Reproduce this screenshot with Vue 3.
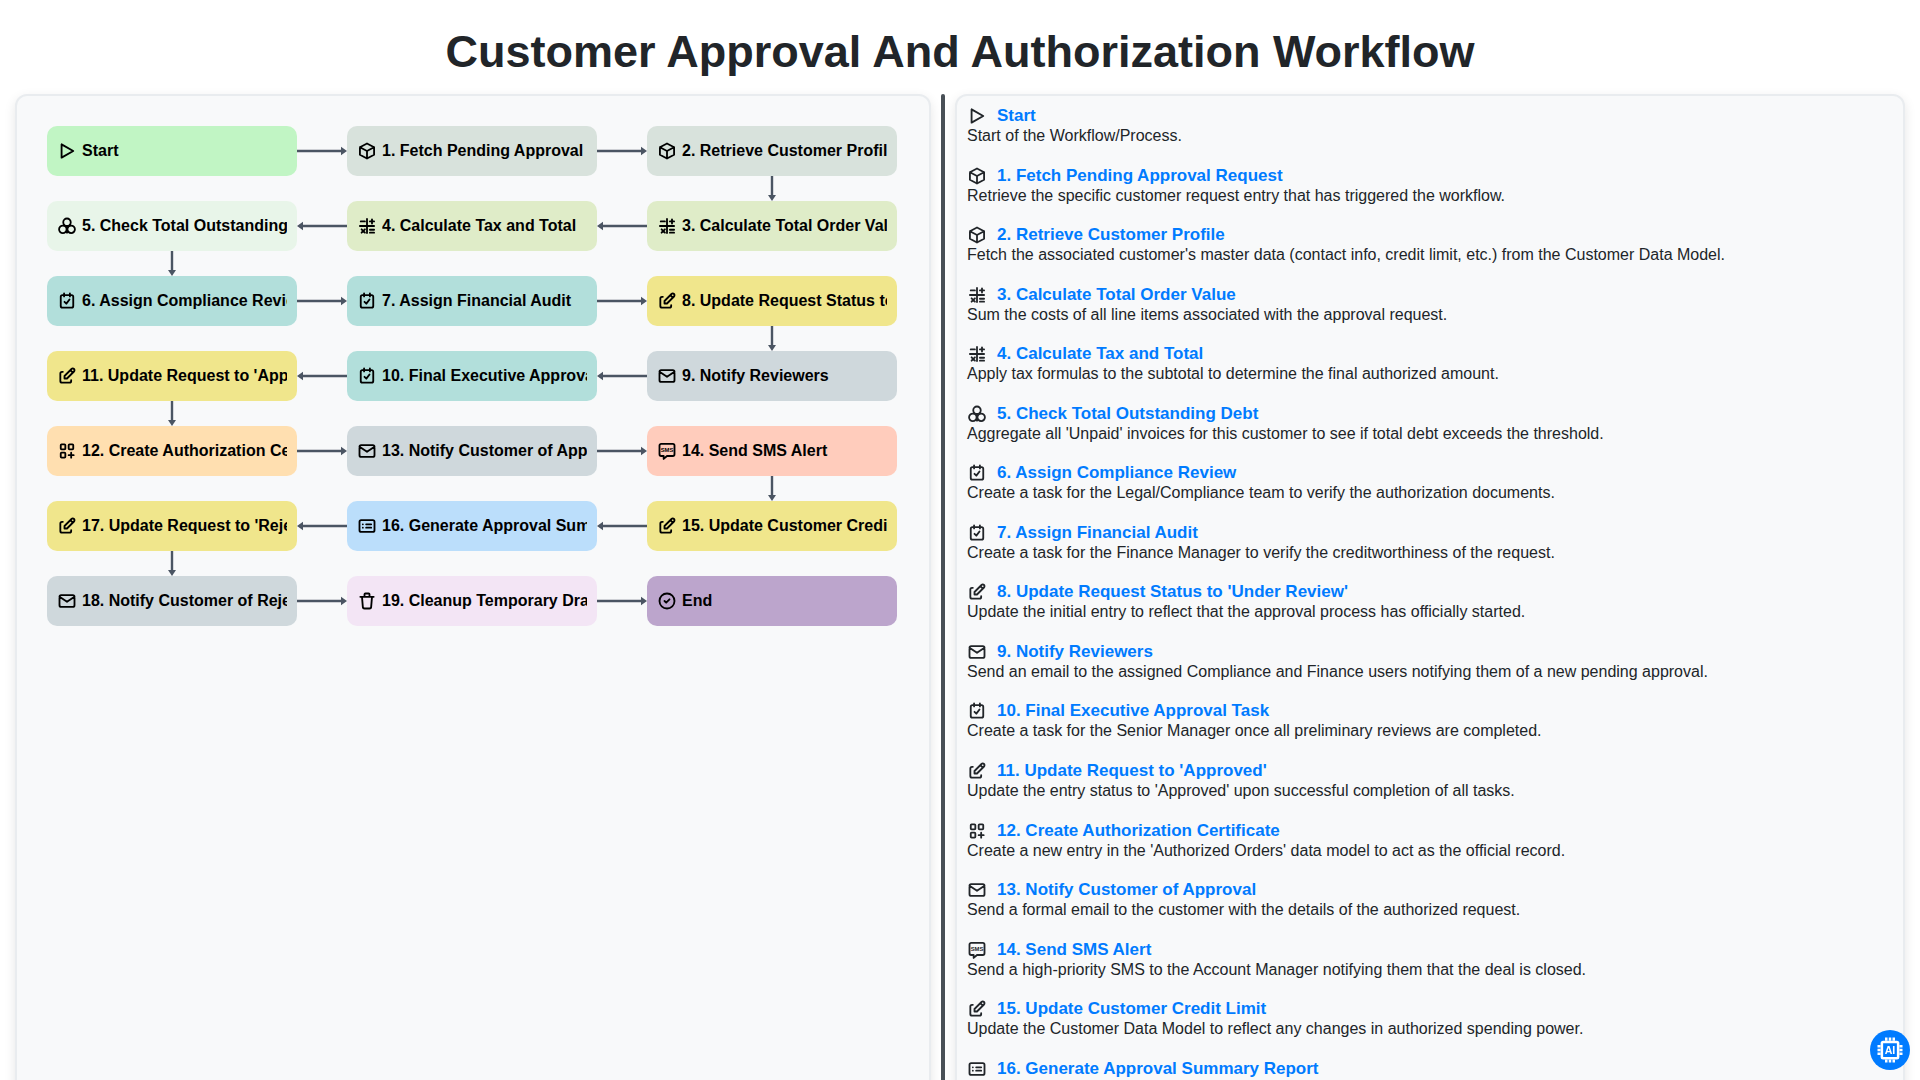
<script setup>
const icons = {
  play: 'M5.5 4v16l14 -8z',
  box: 'M12 3l8.5 4.5v9l-8.5 4.5l-8.5 -4.5v-9z M12 12l8.5 -4.5 M12 12v9 M12 12l-8.5 -4.5',
  math: 'M3.5 12h17 M12 3.5v17 M4.5 6.5h5 M15.5 6.5h5 M18 4v5 M5.5 16l4 4 M9.5 16l-4 4 M15.5 16.5h5 M15.5 20h5',
  circles: 'M12 7.5m-4.5 0a4.5 4.5 0 1 0 9 0a4.5 4.5 0 1 0 -9 0 M7 16m-4.5 0a4.5 4.5 0 1 0 9 0a4.5 4.5 0 1 0 -9 0 M17 16m-4.5 0a4.5 4.5 0 1 0 9 0a4.5 4.5 0 1 0 -9 0 M12 12v8 M7.5 11.5l4.5 1l4.5 -1',
  task: 'M4.5 7a2 2 0 0 1 2 -2h11a2 2 0 0 1 2 2v11a2 2 0 0 1 -2 2h-11a2 2 0 0 1 -2 -2z M8.5 3v3.5 M15.5 3v3.5 M9 13l2.2 2.2l3.8 -5',
  edit: 'M7 7h-1a2 2 0 0 0 -2 2v9a2 2 0 0 0 2 2h9a2 2 0 0 0 2 -2v-1 M20.385 6.585a2.1 2.1 0 0 0 -2.97 -2.97l-8.415 8.385v3h3l8.385 -8.415z M16 5l3 3',
  mail: 'M3 7a2 2 0 0 1 2 -2h14a2 2 0 0 1 2 2v10a2 2 0 0 1 -2 2h-14a2 2 0 0 1 -2 -2z M3 7l9 6l9 -6',
  apps: 'M4.5 5a1 1 0 0 1 1 -1h3.5a1 1 0 0 1 1 1v4a1 1 0 0 1 -1 1h-3.5a1 1 0 0 1 -1 -1z M14 5a1 1 0 0 1 1 -1h3.5a1 1 0 0 1 1 1v4a1 1 0 0 1 -1 1h-3.5a1 1 0 0 1 -1 -1z M4.5 15a1 1 0 0 1 1 -1h3.5a1 1 0 0 1 1 1v4a1 1 0 0 1 -1 1h-3.5a1 1 0 0 1 -1 -1z M14 17h6 M17 14v6',
  sms: 'M3 5.5a2 2 0 0 1 2 -2h14a2 2 0 0 1 2 2v10.5a2 2 0 0 1 -2 2h-7l-4 3.5v-3.5h-3a2 2 0 0 1 -2 -2z',
  report: 'M3 7a2 2 0 0 1 2 -2h14a2 2 0 0 1 2 2v10a2 2 0 0 1 -2 2h-14a2 2 0 0 1 -2 -2z M7 10h.01 M7 14h.01 M11 10h6 M11 14h6',
  trash: 'M4 7h16 M6 7l1 12a2 2 0 0 0 2 2h6a2 2 0 0 0 2 -2l1 -12 M9 7v-3a1 1 0 0 1 1 -1h4a1 1 0 0 1 1 1v3',
  done: 'M3 12a9 9 0 1 0 18 0a9 9 0 1 0 -18 0 M9 12l2 2l4 -4'
}

const n = (label, icon, color) => ({ label, icon, color })

// snake layout: every second row runs right to left
const rows = [
  { dir: 'right', down: 'end', nodes: [n('Start', 'play', '#c1f5c4'), n('1. Fetch Pending Approval Request', 'box', '#d8e2dc'), n('2. Retrieve Customer Profile', 'box', '#d8e2dc')] },
  { dir: 'left', down: 'start', nodes: [n('5. Check Total Outstanding Debt', 'circles', '#e8f5e9'), n('4. Calculate Tax and Total', 'math', '#dfecc8'), n('3. Calculate Total Order Value', 'math', '#dfecc8')] },
  { dir: 'right', down: 'end', nodes: [n('6. Assign Compliance Review', 'task', '#b2dfdb'), n('7. Assign Financial Audit', 'task', '#b2dfdb'), n("8. Update Request Status to 'Under Review'", 'edit', '#f0e68c')] },
  { dir: 'left', down: 'start', nodes: [n("11. Update Request to 'Approved'", 'edit', '#f0e68c'), n('10. Final Executive Approval Task', 'task', '#b2dfdb'), n('9. Notify Reviewers', 'mail', '#cfd8dc')] },
  { dir: 'right', down: 'end', nodes: [n('12. Create Authorization Certificate', 'apps', '#ffdfb0'), n('13. Notify Customer of Approval', 'mail', '#cfd8dc'), n('14. Send SMS Alert', 'sms', '#ffccbc')] },
  { dir: 'left', down: 'start', nodes: [n("17. Update Request to 'Rejected'", 'edit', '#f0e68c'), n('16. Generate Approval Summary Report', 'report', '#bbdefb'), n('15. Update Customer Credit Limit', 'edit', '#f0e68c')] },
  { dir: 'right', down: null, nodes: [n('18. Notify Customer of Rejection', 'mail', '#cfd8dc'), n('19. Cleanup Temporary Drafts', 'trash', '#f3e5f5'), n('End', 'done', '#bca5cc')] }
]

const steps = [
  { icon: 'play', title: 'Start', text: 'Start of the Workflow/Process.' },
  { icon: 'box', title: '1. Fetch Pending Approval Request', text: 'Retrieve the specific customer request entry that has triggered the workflow.' },
  { icon: 'box', title: '2. Retrieve Customer Profile', text: "Fetch the associated customer's master data (contact info, credit limit, etc.) from the Customer Data Model." },
  { icon: 'math', title: '3. Calculate Total Order Value', text: 'Sum the costs of all line items associated with the approval request.' },
  { icon: 'math', title: '4. Calculate Tax and Total', text: 'Apply tax formulas to the subtotal to determine the final authorized amount.' },
  { icon: 'circles', title: '5. Check Total Outstanding Debt', text: "Aggregate all 'Unpaid' invoices for this customer to see if total debt exceeds the threshold." },
  { icon: 'task', title: '6. Assign Compliance Review', text: 'Create a task for the Legal/Compliance team to verify the authorization documents.' },
  { icon: 'task', title: '7. Assign Financial Audit', text: 'Create a task for the Finance Manager to verify the creditworthiness of the request.' },
  { icon: 'edit', title: "8. Update Request Status to 'Under Review'", text: 'Update the initial entry to reflect that the approval process has officially started.' },
  { icon: 'mail', title: '9. Notify Reviewers', text: 'Send an email to the assigned Compliance and Finance users notifying them of a new pending approval.' },
  { icon: 'task', title: '10. Final Executive Approval Task', text: 'Create a task for the Senior Manager once all preliminary reviews are completed.' },
  { icon: 'edit', title: "11. Update Request to 'Approved'", text: "Update the entry status to 'Approved' upon successful completion of all tasks." },
  { icon: 'apps', title: '12. Create Authorization Certificate', text: "Create a new entry in the 'Authorized Orders' data model to act as the official record." },
  { icon: 'mail', title: '13. Notify Customer of Approval', text: 'Send a formal email to the customer with the details of the authorized request.' },
  { icon: 'sms', title: '14. Send SMS Alert', text: 'Send a high-priority SMS to the Account Manager notifying them that the deal is closed.' },
  { icon: 'edit', title: '15. Update Customer Credit Limit', text: 'Update the Customer Data Model to reflect any changes in authorized spending power.' },
  { icon: 'report', title: '16. Generate Approval Summary Report', text: '' }
]
</script>

<template>
  <div class="page">
    <h1 class="page-title">Customer Approval And Authorization Workflow</h1>

    <div class="columns">
      <section class="panel flow-panel">
        <template v-for="(row, r) in rows" :key="r">
          <div class="flow-row">
            <template v-for="(node, i) in row.nodes" :key="node.label">
              <svg v-if="i > 0" class="arrow-h" :class="{ flip: row.dir === 'right' }" viewBox="0 0 50 10" width="50" height="10">
                <path d="M4 5H50" />
                <polygon points="0,5 6,0.8 6,9.2" />
              </svg>
              <div class="node" :style="{ background: node.color }">
                <svg class="icon" viewBox="0 0 24 24" width="20" height="20">
                  <path :d="icons[node.icon]" />
                  <text v-if="node.icon === 'sms'" x="12" y="13" class="sms-text">SMS</text>
                </svg>
                <span class="node-label">{{ node.label }}</span>
              </div>
            </template>
          </div>
          <div v-if="row.down" class="flow-down" :class="row.down">
            <svg class="arrow-v" viewBox="0 0 10 25" width="10" height="25">
              <path d="M5 0V21" />
              <polygon points="5,25 1,19 9,19" />
            </svg>
          </div>
        </template>
      </section>

      <div class="divider"></div>

      <section class="panel list-panel">
        <div v-for="step in steps" :key="step.title" class="step">
          <div class="step-head">
            <svg class="icon" viewBox="0 0 24 24" width="20" height="20">
              <path :d="icons[step.icon]" />
              <text v-if="step.icon === 'sms'" x="12" y="13" class="sms-text">SMS</text>
            </svg>
            <span class="step-title">{{ step.title }}</span>
          </div>
          <div class="step-text">{{ step.text }}</div>
        </div>
      </section>
    </div>

    <button class="ai-btn">
      <svg viewBox="0 0 24 24" width="30" height="30">
        <rect x="5.5" y="5.5" width="13" height="13" rx="1" class="chip" />
        <path class="chip" d="M9 2v2.5 M12 2v2.5 M15 2v2.5 M9 19.5v2.5 M12 19.5v2.5 M15 19.5v2.5 M2 9h2.5 M2 12h2.5 M2 15h2.5 M19.5 9h2.5 M19.5 12h2.5 M19.5 15h2.5" />
        <text x="12" y="15.2" class="chip-text">AI</text>
      </svg>
    </button>
  </div>
</template>

<style>
html, body { margin: 0; overflow: hidden; background: #fff; }
</style>

<style scoped>
.page {
  height: 100vh; overflow: hidden; position: relative; background: #fff;
  font-family: "Liberation Sans", Arial, sans-serif; color: #212529;
}
.page-title {
  margin: 0; height: 94px; line-height: 104px; text-align: center;
  font-size: 45px; font-weight: 700; color: #212529;
}
.columns { display: flex; padding: 0 15px; height: 1100px; }
.panel {
  box-sizing: border-box; background: #f8f9fa; border: 2px solid #e9ecef; border-radius: 12px;
  box-shadow: 0 4px 12px rgba(0,0,0,0.1); overflow: hidden;
}
.flow-panel { width: 916px; padding: 30px; flex: none; }
.divider { width: 4px; margin: 0 10px; background: #495057; border-radius: 2px; flex: none; }
.list-panel { flex: 1; padding: 10px 10px; }

.flow-row { display: flex; align-items: center; width: 850px; }
.node {
  width: 250px; height: 50px; box-sizing: border-box; padding: 0 10px; border-radius: 10px;
  display: flex; align-items: center; flex: none; color: #000; font-size: 16px; font-weight: 700;
}
.node-label { margin-left: 5px; white-space: nowrap; overflow: hidden; flex: 1; min-width: 0; }
.icon { flex: none; }
.icon path { fill: none; stroke: currentColor; stroke-width: 2.2; stroke-linecap: round; stroke-linejoin: round; }
.sms-text { font-size: 7px; font-weight: 700; text-anchor: middle; fill: currentColor; }

.arrow-h { flex: none; display: block; }
.arrow-h.flip { transform: scaleX(-1); }
.arrow-h path, .arrow-v path { fill: none; stroke: #4b5563; stroke-width: 2.4; }
.arrow-h polygon, .arrow-v polygon { fill: #4b5563; }

.flow-down { display: flex; width: 850px; height: 25px; }
.flow-down.end { justify-content: flex-end; }
.arrow-v { display: block; margin: 0 120px; }

.step { height: 59.55px; }
.step-head { display: flex; align-items: center; height: 20px; }
.step-head .icon { margin-right: 10px; color: #212529; }
.step-title { font-size: 17px; font-weight: 700; color: #007bff; }
.step-text { font-size: 16px; line-height: 20.6px; color: #212529; white-space: nowrap; }

.ai-btn {
  position: fixed; right: 10px; bottom: 10px; width: 40px; height: 40px; padding: 0; border: none;
  border-radius: 50%; background: #007bff; display: flex; align-items: center; justify-content: center;
}
.chip { fill: none; stroke: #fff; stroke-width: 2; }
.chip-text { font-size: 8.5px; font-weight: 700; fill: #fff; text-anchor: middle; font-family: "Liberation Sans", Arial, sans-serif; }
</style>
